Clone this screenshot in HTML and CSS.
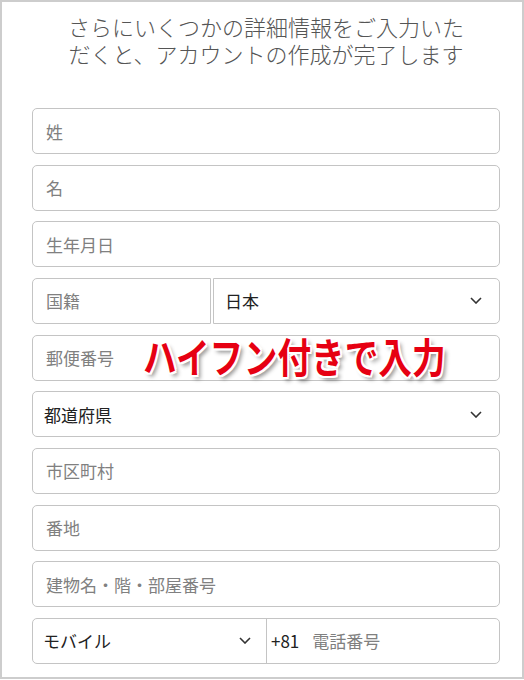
FILE: index.html
```html
<!DOCTYPE html>
<html lang="ja">
<head>
<meta charset="utf-8">
<title>詳細情報</title>
<link rel="stylesheet" href="styles.css">
</head>
<body>
<div class="frame">
  <p class="lead">さらにいくつかの詳細情報をご入力いただくと、アカウントの作成が完了します</p>
  <div class="form">
    <div class="field"><span class="ph">姓</span></div>
    <div class="field"><span class="ph">名</span></div>
    <div class="field"><span class="ph">生年月日</span></div>
    <div class="row">
      <div class="field left"><span class="ph">国籍</span></div>
      <div class="field sel right"><span class="val">日本</span><svg class="chev" width="12" height="7" viewBox="0 0 12 7"><path d="M1 1 L6 6 L11 1" fill="none" stroke="#333" stroke-width="1.6"/></svg></div>
    </div>
    <div class="field"><span class="ph">郵便番号</span></div>
    <div class="field sel"><span class="val">都道府県</span><svg class="chev" width="12" height="7" viewBox="0 0 12 7"><path d="M1 1 L6 6 L11 1" fill="none" stroke="#333" stroke-width="1.6"/></svg></div>
    <div class="field"><span class="ph">市区町村</span></div>
    <div class="field"><span class="ph">番地</span></div>
    <div class="field"><span class="ph">建物名・階・部屋番号</span></div>
    <div class="field phone">
      <div class="phone-sel"><span class="val">モバイル</span><svg class="chev" width="12" height="7" viewBox="0 0 12 7"><path d="M1 1 L6 6 L11 1" fill="none" stroke="#333" stroke-width="1.6"/></svg></div>
      <div class="phone-num"><span class="cc">+81</span><span class="ph">電話番号</span></div>
    </div>
  </div>
  <div class="callout">ハイフン付きで入力</div>
</div>
</body>
</html>
```

FILE: styles.css
```css
html, body {
  margin: 0;
  padding: 0;
  background: #fff;
}
body {
  font-family: "Noto Sans CJK JP", "Noto Sans", sans-serif;
}
.frame {
  box-sizing: border-box;
  position: relative;
  width: 524px;
  height: 679px;
  border: 2px solid #cdcdcd;
  padding: 11px 22px 0 30px;
}
.lead {
  margin: 0 auto;
  max-width: 400px;
  text-align: center;
  font-size: 22px;
  line-height: 27px;
  font-weight: 300;
  color: #555;
}
.form {
  display: flex;
  flex-direction: column;
  gap: 10.67px;
  margin-top: 41px;
}
.field {
  box-sizing: border-box;
  height: 46px;
  border: 1px solid #c4c4c4;
  border-radius: 5px;
  display: flex;
  align-items: center;
  padding: 0 13px;
  font-size: 17px;
  background: #fff;
}
.ph {
  color: #808080;
}
.val {
  color: #222;
}
.sel {
  justify-content: space-between;
  padding: 0 17px 0 11px;
}
.chev {
  display: block;
  flex: none;
}
.row {
  display: flex;
  gap: 2px;
}
.left {
  width: 179px;
  flex: none;
  border-radius: 5px 0 0 5px;
}
.right {
  flex: 1;
  border-radius: 0 5px 5px 0;
}
.phone {
  padding: 0;
  align-items: stretch;
}
.phone-sel {
  box-sizing: border-box;
  width: 234px;
  flex: none;
  border-right: 1px solid #c4c4c4;
  display: flex;
  align-items: center;
  justify-content: space-between;
  padding: 0 15px 0 10px;
}
.phone-num {
  display: flex;
  align-items: center;
  padding-left: 4px;
}
.cc {
  color: #222;
  font-size: 17px;
  margin-right: 13px;
}
.callout {
  position: absolute;
  left: 141px;
  top: 331px;
  font-size: 41px;
  line-height: 44px;
  font-weight: 700;
  color: #e60012;
  white-space: nowrap;
  transform: scaleX(0.82);
  transform-origin: left center;
  text-shadow: 2px 0 0 #fff, -2px 0 0 #fff, 0 2px 0 #fff, 0 -2px 0 #fff,
    2px 2px 0 #fff, -2px -2px 0 #fff, 2px -2px 0 #fff, -2px 2px 0 #fff,
    4px 4px 5px rgba(0, 0, 0, 0.45);
}
```
